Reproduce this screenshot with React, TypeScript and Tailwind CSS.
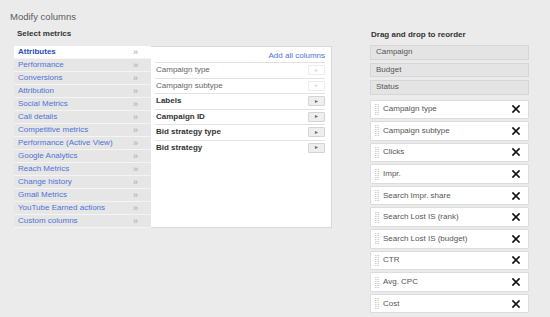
const categories = [
  "Attributes",
  "Performance",
  "Conversions",
  "Attribution",
  "Social Metrics",
  "Call details",
  "Competitive metrics",
  "Performance (Active View)",
  "Google Analytics",
  "Reach Metrics",
  "Change history",
  "Gmail Metrics",
  "YouTube Earned actions",
  "Custom columns",
];

const metrics = [
  { name: "Campaign type", added: true },
  { name: "Campaign subtype", added: true },
  { name: "Labels", added: false },
  { name: "Campaign ID", added: false },
  { name: "Bid strategy type", added: false },
  { name: "Bid strategy", added: false },
];

const fixedCols = ["Campaign", "Budget", "Status"];

const movableCols = [
  "Campaign type",
  "Campaign subtype",
  "Clicks",
  "Impr.",
  "Search Impr. share",
  "Search Lost IS (rank)",
  "Search Lost IS (budget)",
  "CTR",
  "Avg. CPC",
  "Cost",
];

function Grip() {
  return (
    <svg width="4" height="11" viewBox="0 0 4 11" className="shrink-0">
      {[0, 2, 4, 6, 8, 10].map((y) => (
        <g key={y} fill="#cfcfcf">
          <rect x="0" y={y} width="1.5" height="1" />
          <rect x="2.5" y={y} width="1.5" height="1" />
        </g>
      ))}
    </svg>
  );
}

function RemoveIcon() {
  return (
    <svg width="8" height="8" viewBox="0 0 8 8" className="shrink-0">
      <path d="M1 1 L7 7 M7 1 L1 7" stroke="#111" strokeWidth="1.7" strokeLinecap="square" />
    </svg>
  );
}

export default function App() {
  return (
    <div
      className="w-[550px] h-[317px] overflow-hidden bg-[#ebebeb] pl-[10px] pt-[12px] text-[8px] leading-none"
      style={{ fontFamily: '"Liberation Sans", Arial, sans-serif' }}
    >
      <div className="h-[13px] text-[9.5px] text-[#5c5c5c]">Modify columns</div>

      <div className="mt-[4px] flex">
        {/* select metrics */}
        <div className="ml-[4px] flex flex-col">
          <div className="h-[17px] pl-[3px] pt-px font-bold text-[#333]">Select metrics</div>
          <div className="flex">
            <div className="flex w-[137px] flex-col">
              {categories.map((c, i) => (
                <div
                  key={c}
                  className={
                    i === 0
                      ? "flex h-[13px] items-center justify-between border-b border-[#f4f4f4] bg-white pl-[4px] pr-[13px] font-bold text-[#2b4fb5]"
                      : "flex h-[13px] items-center justify-between border-b border-[#f4f4f4] bg-[#e6e6e6] pl-[4px] pr-[13px] text-[#4f72d6]"
                  }
                >
                  <span>{c}</span>
                  <span className="text-[9px] font-normal text-[#a8a8a8]">»</span>
                </div>
              ))}
            </div>

            <div className="flex h-[182px] w-[181px] flex-col border border-l-0 border-[#d8d8d8] bg-white pl-[4px] pr-[6px]">
              <div className="flex h-[15px] items-center justify-end pt-[2px] text-[#4f72d6]">Add all columns</div>
              {metrics.map((m) => (
                <div
                  key={m.name}
                  className={
                    m.added
                      ? "flex h-[15.5px] items-center justify-between border-t border-[#e2e2e2] pl-px text-[#666]"
                      : "flex h-[15.5px] items-center justify-between border-t border-[#e2e2e2] pl-px font-bold text-[#333]"
                  }
                >
                  <span>{m.name}</span>
                  <span
                    className={
                      m.added
                        ? "flex h-[10px] w-[17px] items-center justify-center rounded-[1px] border border-[#ececec] bg-white text-[5px] font-normal text-[#d8d8d8]"
                        : "flex h-[10px] w-[17px] items-center justify-center rounded-[1px] border border-[#d4d4d4] bg-[#eeeeee] text-[5px] font-normal text-[#666]"
                    }
                  >
                    ►
                  </span>
                </div>
              ))}
            </div>
          </div>
        </div>

        {/* reorder */}
        <div className="ml-[38px] flex w-[159px] flex-col">
          <div className="h-[16px] pl-px pt-[2px] font-bold text-[#333]">Drag and drop to reorder</div>
          <div className="flex flex-col gap-[3px]">
            {fixedCols.map((c) => (
              <div
                key={c}
                className="flex h-[14.5px] items-center border border-[#d6d6d6] bg-[#e4e4e4] pl-[5px] text-[#555]"
              >
                {c}
              </div>
            ))}
          </div>
          <div className="mt-[5px] flex flex-col gap-[2px]">
            {movableCols.map((c) => (
              <div
                key={c}
                className="flex h-[19.6px] items-center rounded-[1px] border border-[#dcdcdc] bg-white pl-[4px] pr-[8px] text-[#555]"
              >
                <Grip />
                <span className="ml-[4px] flex-1">{c}</span>
                <RemoveIcon />
              </div>
            ))}
          </div>
        </div>
      </div>
    </div>
  );
}
